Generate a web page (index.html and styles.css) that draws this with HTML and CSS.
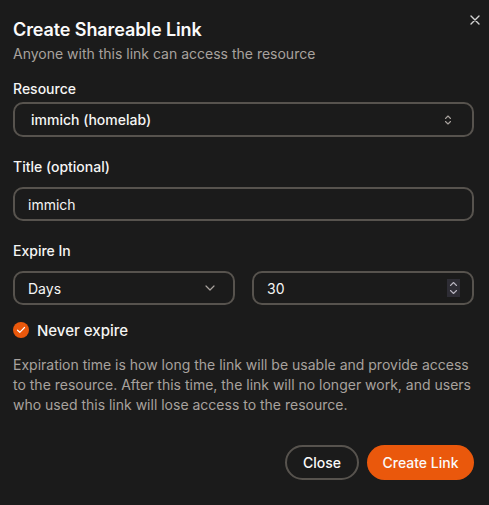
FILE: index.html
```html
<!DOCTYPE html>
<html>
<head>
<meta charset="utf-8">
<link rel="stylesheet" href="styles.css">
</head>
<body>
<div class="dialog">
  <button class="close-x" aria-label="Close">
    <svg width="10" height="10" viewBox="0 0 10 10"><path d="M1 1L9 9M9 1L1 9" stroke="#d4d4d4" stroke-width="1.4" stroke-linecap="round"/></svg>
  </button>
  <header class="header">
    <h1 class="title">Create Shareable Link</h1>
    <p class="subtitle">Anyone with this link can access the resource</p>
  </header>

  <div class="field field-resource">
    <label class="label">Resource</label>
    <div class="box select">
      <span>immich (homelab)</span>
      <svg class="updown" width="8" height="12" viewBox="0 0 8 12"><path d="M1.5 4.5L4 2L6.5 4.5M1.5 7.5L4 10L6.5 7.5" fill="none" stroke="#a8a29e" stroke-width="1.1" stroke-linecap="round" stroke-linejoin="round"/></svg>
    </div>
  </div>

  <div class="field">
    <label class="label">Title (optional)</label>
    <div class="box input"><span>immich</span></div>
  </div>

  <div class="field field-expire">
    <label class="label">Expire In</label>
    <div class="row">
      <div class="box select">
        <span>Days</span>
        <svg class="down" width="10" height="6" viewBox="0 0 10 6"><path d="M1 1L5 5L9 1" fill="none" stroke="#a8a29e" stroke-width="1.2" stroke-linecap="round" stroke-linejoin="round"/></svg>
      </div>
      <div class="box input number">
        <span>30</span>
        <span class="spin">
          <svg width="13" height="18" viewBox="0 0 13 18"><path d="M3.5 6.5L6.5 3.5L9.5 6.5M3.5 11.5L6.5 14.5L9.5 11.5" fill="none" stroke="#b8b5c0" stroke-width="1.1" stroke-linecap="round" stroke-linejoin="round"/></svg>
        </span>
      </div>
    </div>
  </div>

  <label class="check">
    <span class="check-dot">
      <svg width="10" height="8" viewBox="0 0 10 8"><path d="M1.5 4.2L3.8 6.3L8.5 1.5" fill="none" stroke="#fff" stroke-width="1.2" stroke-linecap="round" stroke-linejoin="round"/></svg>
    </span>
    <span>Never expire</span>
  </label>

  <p class="help">Expiration time is how long the link will be usable and provide access to the resource. After this time, the link will no longer work, and users who used this link will lose access to the resource.</p>

  <footer class="actions">
    <button class="btn btn-outline">Close</button>
    <button class="btn btn-primary">Create Link</button>
  </footer>
</div>
</body>
</html>
```

FILE: styles.css
```css
* { box-sizing: border-box; }
html, body {
  margin: 0;
  background: #1b1b1b;
  font-family: Inter, "Noto Sans", sans-serif;
  color: #f5f5f4;
}
.dialog {
  position: relative;
  padding: 16px 15px 0 13px;
  width: 489px;
  height: 505px;
}
.close-x {
  position: absolute;
  top: 15px;
  right: 9px;
  width: 10px;
  height: 10px;
  padding: 0;
  border: 0;
  background: none;
  display: flex;
}
.header { margin-bottom: 15px; }
.title {
  margin: 0;
  font-size: 18px;
  line-height: 28px;
  font-weight: 600;
  color: #fafafa;
  letter-spacing: -0.1px;
}
.subtitle {
  margin: 0;
  font-size: 14px;
  line-height: 20px;
  color: #a8a29e;
}
.field { display: flex; flex-direction: column; margin-bottom: 20px; }
.label {
  font-size: 14px;
  line-height: 20px;
  font-weight: 500;
  color: #f5f5f4;
  margin-bottom: 10px;
}
.field-resource .label { margin-bottom: 3px; }
.box {
  height: 34px;
  border: 2px solid #57534e;
  border-radius: 10px;
  display: flex;
  align-items: center;
  font-size: 14px;
  font-weight: 500;
  color: #f5f5f4;
}
.field-resource .box { height: 35px; }
.select { padding: 0 16px 0 17px; justify-content: space-between; }
.input { padding: 0 14px 0 13px; font-weight: 400; }
.field-resource .select { padding-left: 16px; padding-right: 20px; }
.select .down { margin-right: 2px; }
.row { display: grid; grid-template-columns: 1fr 1fr; gap: 17px; }
.row .select { font-weight: 400; padding-left: 13px; }
.number { justify-content: space-between; padding-right: 12px; }
.spin {
  width: 13px;
  height: 18px;
  background: #2e2d35;
  display: flex;
}
.field-expire { margin-bottom: 16px; }
.check {
  display: flex;
  align-items: center;
  gap: 8px;
  height: 18px;
  font-size: 15px;
  font-weight: 500;
  color: #f5f5f4;
}
.check-dot {
  width: 16px;
  height: 16px;
  border-radius: 50%;
  background: #ea580c;
  display: flex;
  align-items: center;
  justify-content: center;
}
.help {
  margin: 16px 0 0;
  font-size: 14px;
  line-height: 20px;
  color: #a8a29e;
}
.actions {
  display: flex;
  justify-content: flex-end;
  gap: 8px;
  margin-top: 30px;
}
.btn {
  height: 35px;
  border-radius: 18px;
  font-family: Inter, "Noto Sans", sans-serif;
  font-size: 14px;
  font-weight: 500;
  color: #fafafa;
  padding: 0;
  white-space: nowrap;
}
.btn-outline {
  background: transparent;
  border: 2px solid #57534e;
  width: 74px;
}
.btn-primary {
  background: #ea580c;
  border: 0;
  width: 107px;
}
```
